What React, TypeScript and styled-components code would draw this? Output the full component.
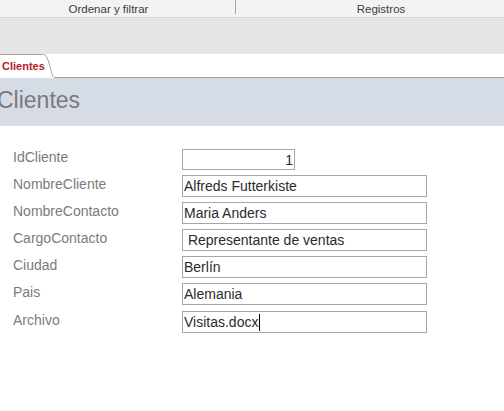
import styled, { createGlobalStyle } from "styled-components";

const GlobalStyle = createGlobalStyle`
  html, body {
    margin: 0;
    padding: 0;
    background: #ffffff;
    font-family: "Liberation Sans", Arial, sans-serif;
  }
`;

const fields = [
  { label: "IdCliente", value: "1", narrow: true },
  { label: "NombreCliente", value: "Alfreds Futterkiste" },
  { label: "NombreContacto", value: "Maria Anders" },
  { label: "CargoContacto", value: " Representante de ventas" },
  { label: "Ciudad", value: "Berlín" },
  { label: "Pais", value: "Alemania" },
  { label: "Archivo", value: "Visitas.docx", active: true, spaced: true },
];

const App = () => {
  return (
    <Page>
      <GlobalStyle />
      <RibbonLabels>
        <GroupLabel $width={235} $shift={-18}>
          Ordenar y filtrar
        </GroupLabel>
        <Separator />
        <GroupLabel $shift={22}>Registros</GroupLabel>
      </RibbonLabels>
      <RibbonBody />

      <TabStrip>
        <Tab>Clientes</Tab>
        <TabCurve width="15" height="24" viewBox="0 0 15 24">
          <path
            d="M0 0.5 H1.5 C5 0.5 6 3 8 9 C10 16 11 23.5 14 23.5 H15"
            fill="#ffffff"
            stroke="#a8a49c"
            strokeWidth="1"
          />
        </TabCurve>
        <TabLine />
      </TabStrip>

      <Header>
        <Title>Clientes</Title>
      </Header>

      <Form>
        {fields.map((f) => (
          <Row key={f.label} $spaced={!!f.spaced}>
            <Label>{f.label}</Label>
            <Field $narrow={!!f.narrow}>
              {f.value}
              {f.active && <Caret />}
            </Field>
          </Row>
        ))}
      </Form>
    </Page>
  );
};

const Page = styled.div`
  width: 504px;
  height: 411px;
  overflow: hidden;
  background: #ffffff;
`;

const RibbonLabels = styled.div`
  display: flex;
  height: 17px;
  background: #f3f3f3;
  border-bottom: 1px solid #d6d6d6;
`;

const GroupLabel = styled.div<{ $width?: number; $shift: number }>`
  ${(p) => (p.$width ? `width: ${p.$width}px;` : "flex: 1;")}
  box-sizing: border-box;
  ${(p) =>
    p.$shift < 0
      ? `padding-right: ${-p.$shift}px;`
      : `padding-left: ${p.$shift}px;`}
  text-align: center;
  font-size: 11.5px;
  line-height: 18px;
  color: #3c3c3c;
  white-space: nowrap;
`;

const Separator = styled.div`
  width: 1px;
  height: 14px;
  background: #a6a6a6;
`;

const RibbonBody = styled.div`
  height: 36px;
  background: #e6e6e6;
`;

const TabStrip = styled.div`
  display: flex;
  height: 24px;
  background: #ffffff;
`;

const Tab = styled.div`
  width: 41px;
  box-sizing: border-box;
  border-top: 1px solid #a8a49c;
  padding-left: 2px;
  font-size: 11px;
  font-weight: bold;
  line-height: 23px;
  color: #b3202a;
`;

const TabCurve = styled.svg`
  display: block;
  flex: none;
`;

const TabLine = styled.div`
  flex: 1;
  border-bottom: 1px solid #a8a49c;
`;

const Header = styled.div`
  height: 48px;
  box-sizing: border-box;
  padding-top: 9px;
  background: #d5dce6;
`;

const Title = styled.div`
  margin-left: -3px;
  font-size: 23px;
  line-height: 26px;
  color: #7a7a7a;
`;

const Form = styled.div`
  display: flex;
  flex-direction: column;
  gap: 5px;
  padding-top: 22px;
`;

const Row = styled.div<{ $spaced: boolean }>`
  display: grid;
  grid-template-columns: 169px auto;
  align-items: center;
  padding-left: 13px;
  margin-top: ${(p) => (p.$spaced ? "1px" : "0")};
`;

const Label = styled.div`
  font-size: 14px;
  line-height: 18px;
  padding-bottom: 4px;
  color: #7b7b7b;
  white-space: nowrap;
`;

const Field = styled.div<{ $narrow: boolean }>`
  width: ${(p) => (p.$narrow ? "113px" : "245px")};
  height: ${(p) => (p.$narrow ? "21px" : "22px")};
  box-sizing: border-box;
  border: 1px solid #a6a6a6;
  padding: ${(p) => (p.$narrow ? "0 1px 0 0" : "0 0 0 1px")};
  text-align: ${(p) => (p.$narrow ? "right" : "left")};
  font-size: 14px;
  line-height: 20px;
  color: #2b2b2b;
  white-space: pre;
  overflow: hidden;
`;

const Caret = styled.span`
  display: inline-block;
  width: 1px;
  height: 17px;
  margin-left: 1px;
  background: #000000;
  vertical-align: -4px;
`;

export default App;
